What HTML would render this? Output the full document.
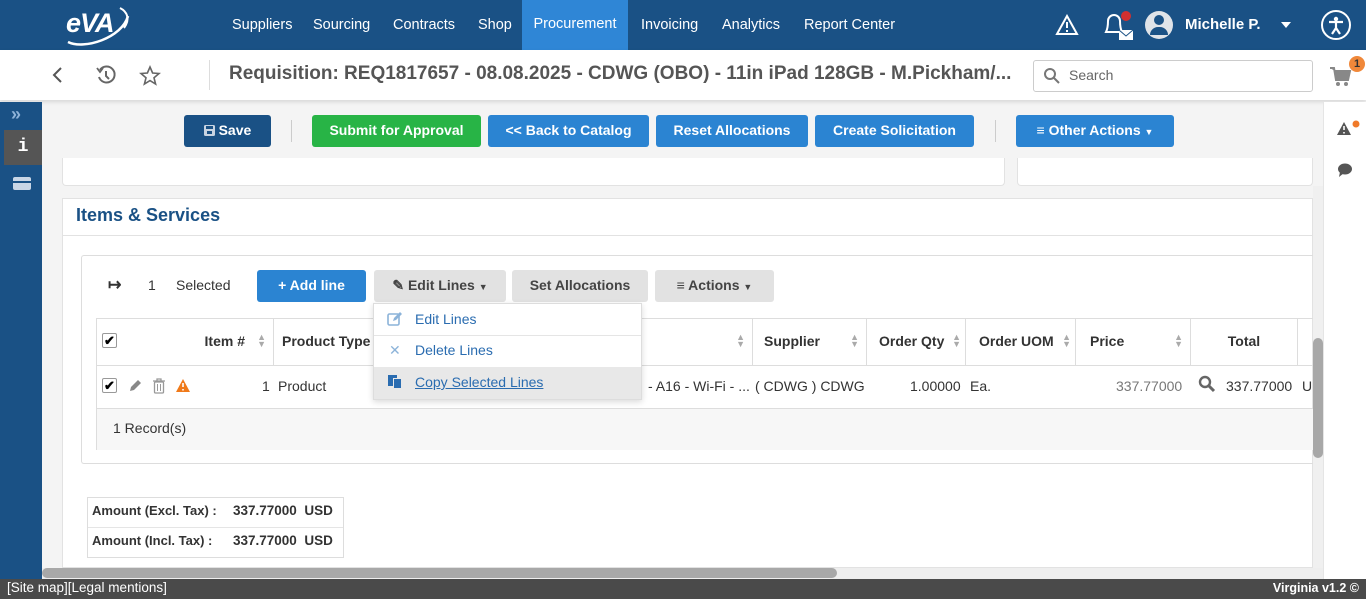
<!DOCTYPE html>
<html><head><meta charset="utf-8"><style>
*{box-sizing:border-box;margin:0;padding:0}
body{width:1366px;height:599px;overflow:hidden;position:relative;font-family:"Liberation Sans",sans-serif;font-size:14px;color:#333;background:#f4f4f4}
.a{position:absolute}
.top{left:0;top:0;width:1366px;height:50px;background:#1a5185}
.nav{top:1px;height:49px;line-height:48px;color:#fff;font-size:14.5px}
.bar2{left:0;top:50px;width:1366px;height:50px;background:#fff;box-shadow:0 2px 4px rgba(0,0,0,.12)}
.btn{top:115px;height:32px;border-radius:3px;color:#fff;font-weight:bold;font-size:14px;text-align:center;line-height:31px}
.b2{top:270px;height:32px;border-radius:3px;font-weight:bold;font-size:14px;text-align:center;line-height:31px;color:#444;background:#e2e2e2}
.th{top:318px;height:47px;line-height:46px;font-weight:bold;font-size:14px;color:#333;border-right:1px solid #ddd;padding-left:8px}
.td{top:365px;height:43px;line-height:42px;font-size:14px;color:#333}
.sort{color:#aaa;font-size:9px;position:absolute;line-height:7px;top:16px}
</style></head><body>
<div class="a top"></div>
<div class="a" style="left:66px;top:8px;color:#fff;font-weight:bold;font-style:italic;font-size:27px;letter-spacing:-1px">eVA</div>
<svg class="a" style="left:64px;top:4px" width="70" height="44"><path d="M4 38 C20 46 58 34 64 12" stroke="#fff" stroke-width="2.5" fill="none"/><path d="M56 4 C64 8 66 16 60 24" stroke="#fff" stroke-width="2" fill="none"/></svg>
<div class="a nav" style="left:232px">Suppliers</div>
<div class="a nav" style="left:313px">Sourcing</div>
<div class="a nav" style="left:393px">Contracts</div>
<div class="a nav" style="left:478px">Shop</div>
<div class="a nav" style="left:522px;top:0;height:50px;width:106px;background:#2f86d6;text-align:center;line-height:49px">Procurement</div>
<div class="a nav" style="left:641px">Invoicing</div>
<div class="a nav" style="left:722px">Analytics</div>
<div class="a nav" style="left:804px">Report Center</div>
<svg class="a" style="left:1055px;top:14px" width="24" height="22"><path d="M12 2 L22 20 H2 Z" stroke="#fff" stroke-width="2" fill="none"/><path d="M12 8v6M12 16v2" stroke="#fff" stroke-width="2"/></svg>
<svg class="a" style="left:1100px;top:10px" width="36" height="30"><path d="M6 22 C8 18 8 14 8 11 a6 6 0 0 1 12 0 c0 3 0 7 2 11 Z" stroke="#fff" stroke-width="2" fill="none"/><rect x="19" y="20" width="14" height="10" fill="#fff"/><path d="M19 20 L26 26 L33 20" stroke="#1a5185" stroke-width="1" fill="none"/><circle cx="26" cy="6" r="5" fill="#d23030"/></svg>
<div class="a" style="left:1145px;top:11px;width:28px;height:28px;border-radius:50%;background:#dfe3e8"></div>
<div class="a" style="left:1154px;top:15px;width:10px;height:10px;border-radius:50%;background:#1a5185"></div>
<div class="a" style="left:1150px;top:27px;width:18px;height:8px;border-radius:9px 9px 0 0;background:#1a5185"></div>
<div class="a" style="left:1185px;top:16px;color:#fff;font-weight:bold;font-size:15px">Michelle P.</div>
<div class="a" style="left:1281px;top:22px;border:5px solid transparent;border-top:6px solid #fff"></div>
<div class="a" style="left:1321px;top:10px;width:30px;height:30px;border-radius:50%;border:2.5px solid #fff"></div>
<svg class="a" style="left:1321px;top:10px" width="30" height="30"><circle cx="15" cy="9" r="2.2" fill="#fff"/><path d="M8 12 H22 M15 12 V18 L11 24 M15 18 L19 24" stroke="#fff" stroke-width="2.2" fill="none"/></svg>

<div class="a bar2"></div>
<svg class="a" style="left:50px;top:66px" width="14" height="18"><path d="M11 2 L4 9 L11 16" stroke="#555" stroke-width="2" fill="none"/></svg>
<svg class="a" style="left:95px;top:64px" width="22" height="22"><path d="M5 6 A8 8 0 1 1 4 13" stroke="#666" stroke-width="2" fill="none"/><path d="M2 4 L5 8 L8 4" stroke="#666" stroke-width="1.8" fill="none"/><path d="M11 7v5l3 3" stroke="#666" stroke-width="2" fill="none"/></svg>
<svg class="a" style="left:139px;top:65px" width="22" height="22"><path d="M11 2 L13.6 8 L20 8.5 L15 12.8 L16.6 19 L11 15.6 L5.4 19 L7 12.8 L2 8.5 L8.4 8 Z" stroke="#666" stroke-width="1.6" fill="none"/></svg>
<div class="a" style="left:209px;top:60px;width:1px;height:30px;background:#ddd"></div>
<div class="a" style="left:229px;top:63px;font-size:19px;font-weight:bold;color:#555;white-space:nowrap">Requisition: REQ1817657 - 08.08.2025 - CDWG (OBO) - 11in iPad 128GB - M.Pickham/...</div>
<div class="a" style="left:1033px;top:60px;width:280px;height:32px;border:1px solid #ccc;border-radius:3px"></div>
<svg class="a" style="left:1043px;top:67px" width="18" height="18"><circle cx="7" cy="7" r="5" stroke="#777" stroke-width="2" fill="none"/><path d="M11 11 L16 16" stroke="#777" stroke-width="2"/></svg>
<div class="a" style="left:1069px;top:67px;color:#666;font-size:14px">Search</div>
<svg class="a" style="left:1328px;top:64px" width="24" height="24"><path d="M2 4 H6 L8 16 H20 L22 7 H7" fill="#888" stroke="#888" stroke-width="2"/><circle cx="10" cy="20" r="2" fill="#888"/><circle cx="18" cy="20" r="2" fill="#888"/></svg>
<div class="a" style="left:1349px;top:56px;width:16px;height:16px;border-radius:50%;background:#f0883a;color:#333;font-size:11px;font-weight:bold;text-align:center;line-height:16px">1</div>

<div class="a" style="left:0;top:102px;width:42px;height:477px;background:#1a5185"></div>
<div class="a" style="left:11px;top:104px;color:#8fb3d9;font-size:18px;font-weight:bold">»</div>
<div class="a" style="left:4px;top:130px;width:38px;height:35px;background:#555;color:#fff;font-weight:bold;font-size:18px;text-align:center;line-height:35px;font-family:'Liberation Mono',monospace">i</div>
<div class="a" style="left:13px;top:177px;width:18px;height:13px;background:#c9d6e6;border-radius:2px"></div>
<div class="a" style="left:13px;top:181px;width:18px;height:2px;background:#1a5185"></div>

<div class="a" style="left:1323px;top:102px;width:43px;height:477px;background:#fff;border-left:1px solid #e5e5e5"></div>
<svg class="a" style="left:1336px;top:118px" width="24" height="24"><path d="M8 4 L15 17 H1 Z" fill="#555"/><path d="M8 8v4M8 14v1.5" stroke="#fff" stroke-width="1.6"/><circle cx="20" cy="6" r="3.5" fill="#f07a2a"/></svg>
<svg class="a" style="left:1337px;top:162px" width="16" height="16"><ellipse cx="8" cy="7" rx="7" ry="5.5" fill="#555"/><path d="M3 10 L2 15 L7 11" fill="#555"/></svg>

<div class="a btn" style="left:184px;width:87px;background:#1a5185"><svg width="11" height="11" style="vertical-align:-1px"><rect x="0" y="0" width="11" height="11" rx="1.5" fill="#c8d4e2"/><rect x="2" y="1" width="7" height="3" fill="#1a5185"/><rect x="3" y="6" width="5" height="3" fill="#1a5185"/></svg> Save</div>
<div class="a" style="left:291px;top:120px;width:1px;height:22px;background:#ccc"></div>
<div class="a btn" style="left:312px;width:169px;background:#28b446">Submit for Approval</div>
<div class="a btn" style="left:488px;width:161px;background:#2b84d2">&lt;&lt; Back to Catalog</div>
<div class="a btn" style="left:656px;width:152px;background:#2b84d2">Reset Allocations</div>
<div class="a btn" style="left:815px;width:159px;background:#2b84d2">Create Solicitation</div>
<div class="a" style="left:995px;top:120px;width:1px;height:22px;background:#ccc"></div>
<div class="a btn" style="left:1016px;width:158px;background:#2b84d2">≡ Other Actions <span style="font-size:9px">▼</span></div>

<div class="a" style="left:62px;top:158px;width:943px;height:28px;background:#fff;border:1px solid #e2e2e2;border-top:none;border-radius:0 0 4px 4px"></div>
<div class="a" style="left:1017px;top:158px;width:296px;height:28px;background:#fff;border:1px solid #e2e2e2;border-top:none;border-radius:0 0 4px 4px"></div>

<div class="a" style="left:62px;top:198px;width:1251px;height:370px;background:#fff;border:1px solid #e2e2e2"></div>
<div class="a" style="left:76px;top:205px;font-size:18px;color:#1a5185;font-weight:bold">Items &amp; Services</div>
<div class="a" style="left:63px;top:235px;width:1250px;height:1px;background:#e2e2e2"></div>
<div class="a" style="left:81px;top:255px;width:1232px;height:209px;border:1px solid #ddd;border-right:none;border-radius:3px 0 0 3px"></div>
<div class="a" style="left:108px;top:275px;font-size:16px;font-weight:bold">↦</div>
<div class="a" style="left:148px;top:277px">1</div>
<div class="a" style="left:176px;top:277px">Selected</div>
<div class="a b2" style="left:257px;width:109px;background:#2b84d2;color:#fff">+ Add line</div>
<div class="a b2" style="left:374px;width:132px">✎ Edit Lines <span style="font-size:9px">▼</span></div>
<div class="a b2" style="left:512px;width:136px">Set Allocations</div>
<div class="a b2" style="left:655px;width:119px">≡ Actions <span style="font-size:9px">▼</span></div>

<div class="a" style="left:96px;top:318px;width:1217px;height:132px;border:1px solid #ddd;border-right:none"></div>
<div class="a" style="left:97px;top:365px;width:1216px;height:1px;background:#ddd"></div>
<div class="a" style="left:97px;top:408px;width:1216px;height:42px;background:#f7f7f7;border-top:1px solid #ddd"></div>
<div class="a" style="left:113px;top:420px">1 Record(s)</div>

<div class="a th" style="left:97px;width:177px;padding-right:28px;text-align:right">Item #<span class="sort" style="right:7px">▲<br>▼</span></div>
<div class="a" style="left:102px;top:333px;width:15px;height:15px;border:1px solid #999;border-radius:2px;background:#fff;font-size:13px;line-height:13px;text-align:center;font-weight:bold;color:#000">✔</div>
<div class="a th" style="left:274px;width:479px">Product Type<span class="sort" style="right:7px">▲<br>▼</span></div>
<div class="a th" style="left:753px;width:114px;padding-left:11px">Supplier<span class="sort" style="right:7px">▲<br>▼</span></div>
<div class="a th" style="left:867px;width:99px;padding-left:12px">Order Qty<span class="sort" style="right:4px">▲<br>▼</span></div>
<div class="a th" style="left:966px;width:110px;padding-left:13px">Order UOM<span class="sort" style="right:4px">▲<br>▼</span></div>
<div class="a th" style="left:1076px;width:115px;padding-left:14px">Price<span class="sort" style="right:7px">▲<br>▼</span></div>
<div class="a th" style="left:1191px;width:107px;text-align:center;padding:0">Total</div>

<div class="a" style="left:102px;top:378px;width:15px;height:15px;border:1px solid #999;border-radius:2px;background:#fff;font-size:13px;line-height:13px;text-align:center;font-weight:bold;color:#000">✔</div>
<svg class="a" style="left:127px;top:378px" width="16" height="16"><path d="M3 13 L4 9 L11 2 L14 5 L7 12 Z" fill="#888"/></svg>
<svg class="a" style="left:152px;top:378px" width="14" height="16"><path d="M1 3 H13 M5 3 V1 H9 V3" stroke="#999" stroke-width="1.3" fill="none"/><rect x="2.5" y="4" width="9" height="11" rx="1" stroke="#999" stroke-width="1.3" fill="none"/><path d="M5.5 6v7M8.5 6v7" stroke="#999" stroke-width="1"/></svg>
<svg class="a" style="left:175px;top:378px" width="16" height="15"><path d="M8 1 L15 14 H1 Z" fill="#f07a1a"/><path d="M8 5v4M8 11v1.5" stroke="#fff" stroke-width="1.6"/></svg>
<div class="a td" style="left:262px">1</div>
<div class="a td" style="left:278px">Product</div>
<div class="a td" style="left:648px">- A16 - Wi-Fi - ...</div>
<div class="a td" style="left:755px">( CDWG ) CDWG</div>
<div class="a td" style="left:910px">1.00000</div>
<div class="a td" style="left:970px">Ea.</div>
<div class="a td" style="left:1116px;color:#777">337.77000</div>
<svg class="a" style="left:1198px;top:375px" width="18" height="18"><circle cx="7" cy="7" r="5" stroke="#666" stroke-width="2.4" fill="none"/><path d="M11 11 L16 16" stroke="#666" stroke-width="3"/></svg>
<div class="a td" style="left:1226px">337.77000</div>
<div class="a td" style="left:1302px">U</div>

<div class="a" style="left:373px;top:303px;width:269px;height:97px;background:#fff;border:1px solid #ddd;box-shadow:0 2px 6px rgba(0,0,0,.15)"></div>
<div class="a" style="left:374px;top:335px;width:267px;height:1px;background:#e5e5e5"></div>
<div class="a" style="left:374px;top:367px;width:267px;height:32px;background:#e8e8e8"></div>
<svg class="a" style="left:387px;top:311px" width="16" height="16"><rect x="1" y="3" width="11" height="11" rx="1.5" stroke="#8cb3d9" stroke-width="1.6" fill="none"/><path d="M6 10 L7 7 L13 1 L15 3 L9 9 Z" fill="#8cb3d9"/></svg>
<div class="a" style="left:415px;top:311px;color:#2a6cb0">Edit Lines</div>
<div class="a" style="left:389px;top:342px;color:#8cb3d9;font-size:14px">✕</div>
<div class="a" style="left:415px;top:342px;color:#2a6cb0">Delete Lines</div>
<div class="a" style="left:388px;top:375px;width:9px;height:11px;background:#2a6cb0"></div>
<div class="a" style="left:393px;top:378px;width:9px;height:11px;background:#2a6cb0;border:1px solid #e8e8e8"></div>
<div class="a" style="left:415px;top:374px;color:#2a6cb0;text-decoration:underline">Copy Selected Lines</div>

<div class="a" style="left:87px;top:497px;width:257px;height:61px;border:1px solid #ddd;background:#fff"></div>
<div class="a" style="left:88px;top:527px;width:255px;height:1px;background:#e5e5e5"></div>
<div class="a" style="left:92px;top:503px;font-weight:bold;font-size:13px">Amount (Excl. Tax) :</div>
<div class="a" style="left:233px;top:503px;font-weight:bold;font-size:13.5px">337.77000&nbsp; USD</div>
<div class="a" style="left:92px;top:533px;font-weight:bold;font-size:13px">Amount (Incl. Tax) :</div>
<div class="a" style="left:233px;top:533px;font-weight:bold;font-size:13.5px">337.77000&nbsp; USD</div>

<div class="a" style="left:1313px;top:186px;width:10px;height:393px;background:#f0f0f0"></div>
<div class="a" style="left:1313px;top:338px;width:10px;height:120px;background:#a8a8a8;border-radius:5px"></div>
<div class="a" style="left:42px;top:568px;width:1281px;height:11px;background:#eee"></div>
<div class="a" style="left:42px;top:568px;width:795px;height:10px;background:#a8a8a8;border-radius:5px"></div>

<div class="a" style="left:0;top:579px;width:1366px;height:20px;background:#4a4a4a"></div>
<div class="a" style="left:7px;top:580px;color:#fff;font-size:13.5px">[Site map][Legal mentions]</div>
<div class="a" style="right:7px;top:581px;color:#fff;font-size:12.5px;font-weight:bold">Virginia v1.2 ©</div>
</body></html>
